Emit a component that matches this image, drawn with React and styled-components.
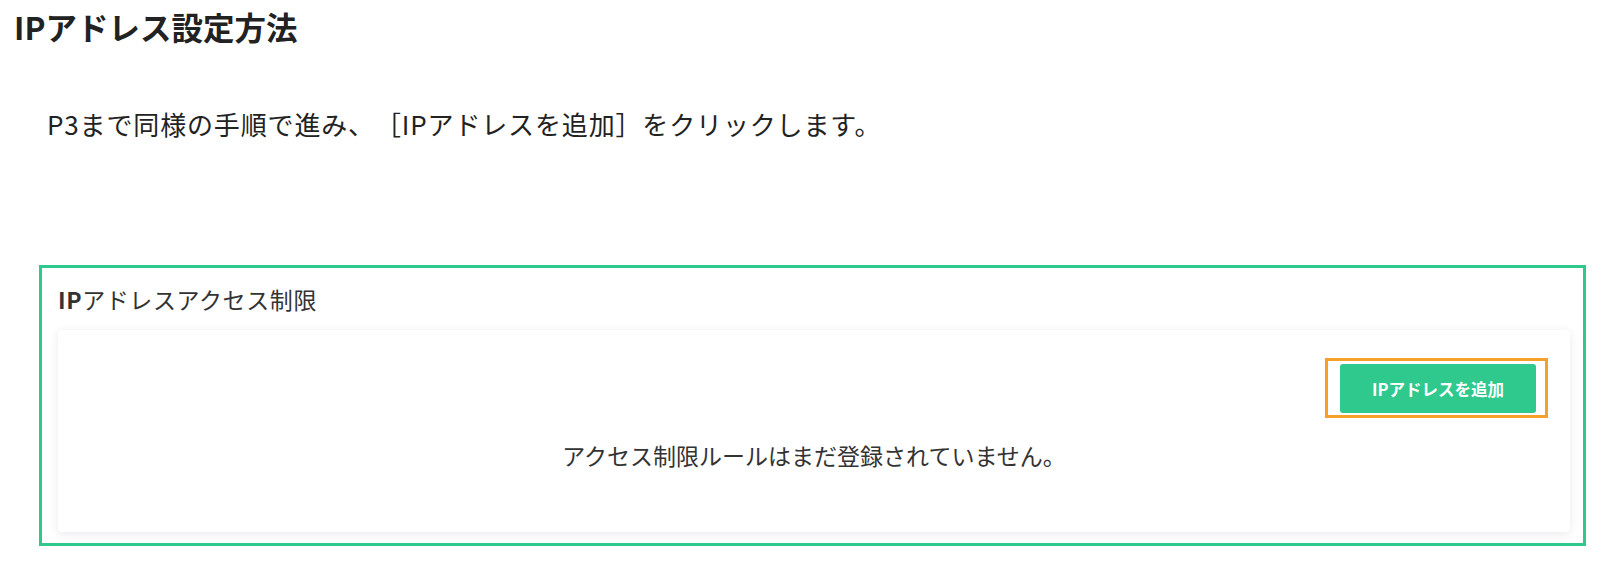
import styled, { createGlobalStyle } from "styled-components";

const GlobalStyle = createGlobalStyle`
  body {
    margin: 0;
    background: #fff;
    font-family: "Noto Sans CJK JP", "Noto Sans", sans-serif;
    color: #222;
    text-spacing-trim: space-all;
  }
`;

const App = () => {
  return (
    <>
      <GlobalStyle />
      <Page>
        <Title>IPアドレス設定方法</Title>
        <Lead>P3まで同様の手順で進み、［IPアドレスを追加］をクリックします。</Lead>

        <Panel>
          <PanelTitle>
            <b>IP</b>アドレスアクセス制限
          </PanelTitle>
          <Card>
            <Toolbar>
              <Highlight>
                <AddButton>IPアドレスを追加</AddButton>
              </Highlight>
            </Toolbar>
            <EmptyText>アクセス制限ルールはまだ登録されていません。</EmptyText>
          </Card>
        </Panel>
      </Page>
    </>
  );
};

const Page = styled.div`
  padding: 6px 14px 14px 14px;
`;

const Title = styled.h2`
  margin: 0;
  font-size: 31.5px;
  line-height: 40px;
  font-weight: 700;
  color: #222;
`;

const Lead = styled.p`
  margin: 60px 0 0 33px;
  font-size: 26px;
  letter-spacing: 0.85px;
  line-height: 36px;
  color: #222;
`;

const Panel = styled.div`
  margin: 123px 0 0 25px;
  border: 3px solid #2fc98d;
  padding: 16px 13px 11px 16px;
`;

const PanelTitle = styled.div`
  font-size: 23px;
  letter-spacing: 0.6px;
  line-height: 30px;
  color: #333;
  margin-bottom: 16px;

  & b {
    font-weight: 700;
  }
`;

const Card = styled.div`
  background: #fff;
  border-radius: 4px;
  box-shadow: 0 2px 10px rgba(40, 50, 80, 0.1);
  padding: 28px 22px 62px 22px;
`;

const Toolbar = styled.div`
  display: flex;
  justify-content: flex-end;
`;

const Highlight = styled.div`
  border: 3px solid #f5a02b;
  padding: 3px 9px 2px 12px;
`;

const AddButton = styled.button`
  display: block;
  width: 196px;
  height: 49px;
  border: none;
  border-radius: 3px;
  background: #2fc98d;
  color: #fff;
  font-family: "Noto Sans CJK JP", "Noto Sans", sans-serif;
  font-size: 16.5px;
  font-weight: 700;
  cursor: pointer;
`;

const EmptyText = styled.p`
  margin: 22px 0 0 0;
  text-align: center;
  font-size: 23px;
  line-height: 30px;
  color: #333;
`;

export default App;
